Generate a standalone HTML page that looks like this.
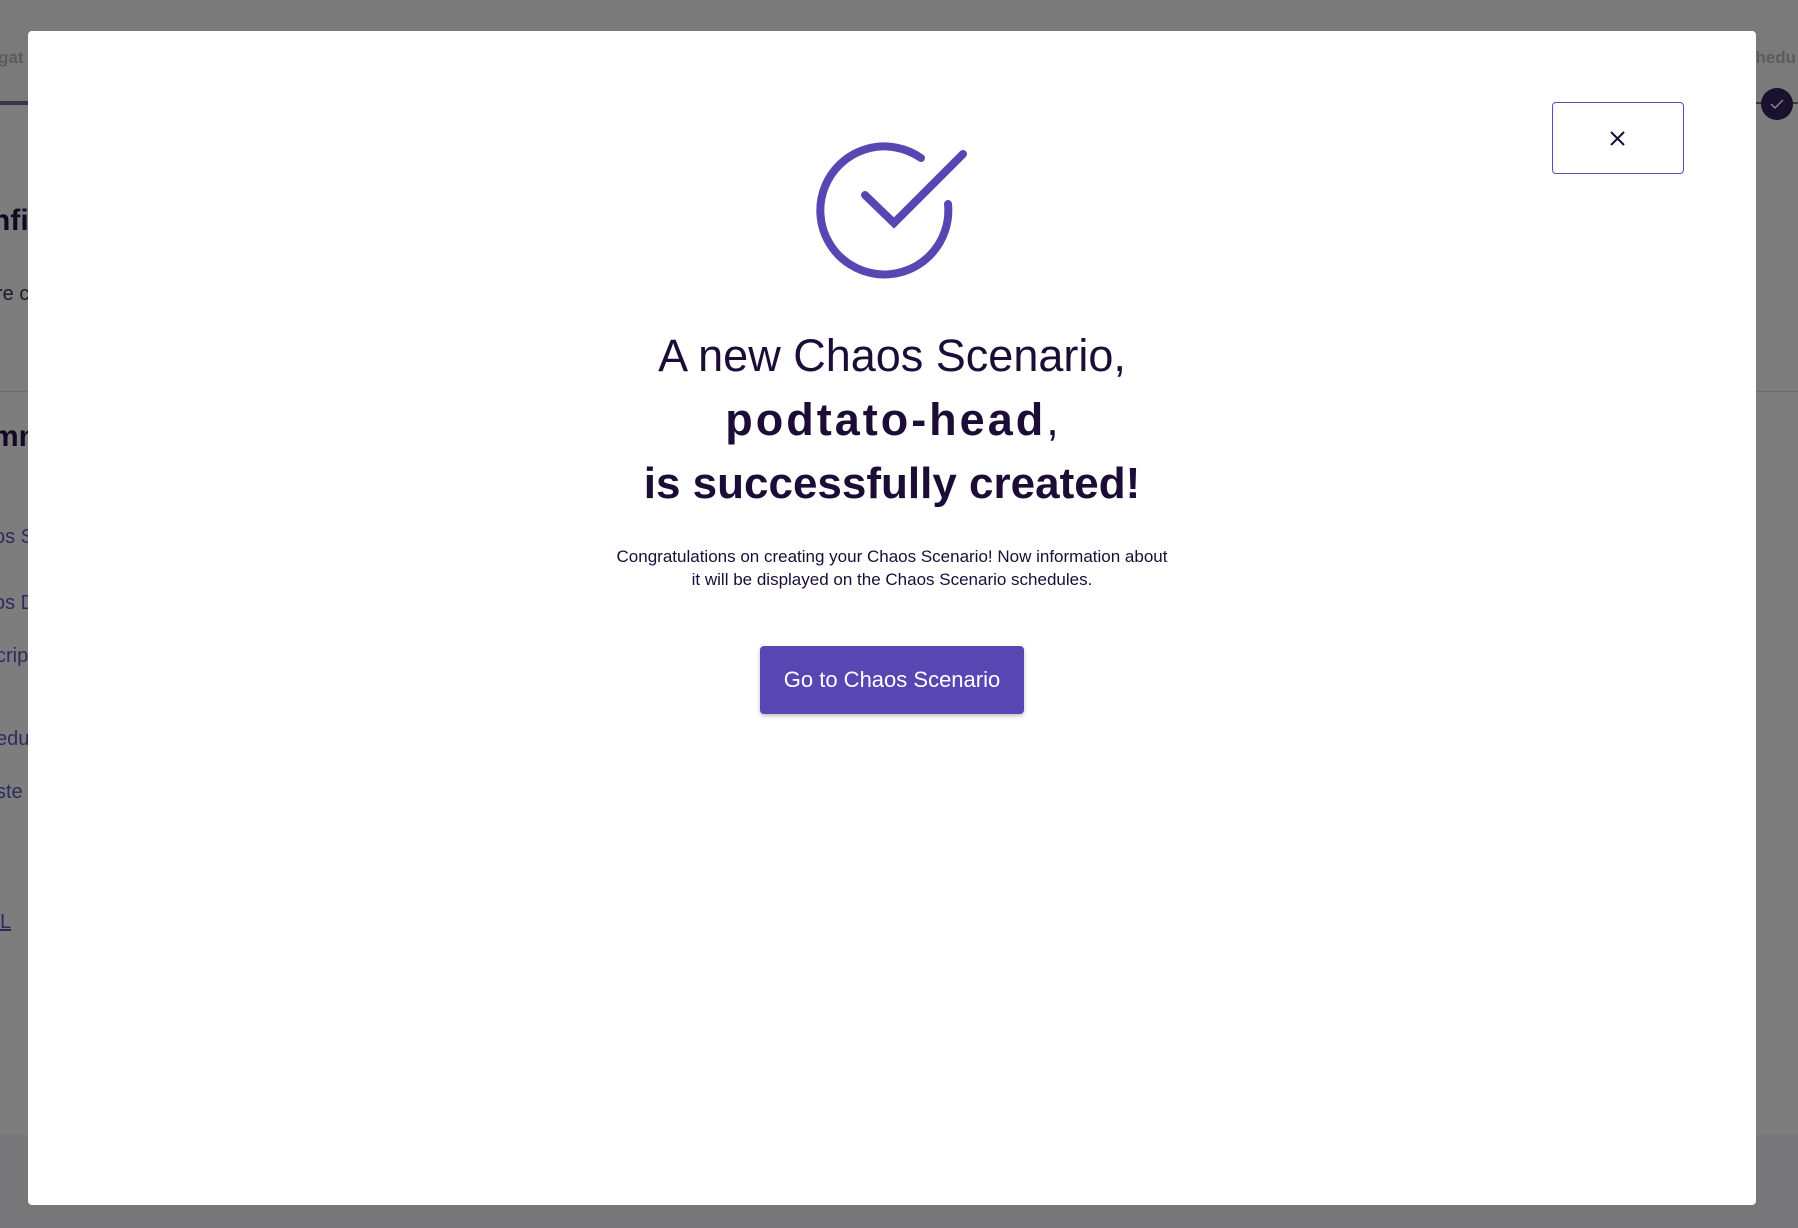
<!DOCTYPE html>
<html><head><meta charset="utf-8">
<style>
*{margin:0;padding:0;box-sizing:border-box}
html,body{width:1798px;height:1228px;overflow:hidden;background:#7d7d7e;font-family:"Liberation Sans",sans-serif;position:relative}
.bgt{position:absolute;white-space:nowrap}
.modal{position:absolute;left:28px;top:31px;width:1728px;height:1174px;background:#fff;border-radius:4px}
.close{position:absolute;left:1524px;top:71px;width:132px;height:72px;border:1.5px solid #5b4bb7;border-radius:4px;background:#fff}
.h{position:absolute;left:0;width:100%;text-align:center;color:#1b0d36;white-space:nowrap}
.btn{position:absolute;left:732px;top:615px;width:264px;height:68px;background:#5847b3;border-radius:4px;color:#fff;font-size:22px;line-height:68px;text-align:center;box-shadow:0 2px 4px rgba(0,0,0,.25)}
</style></head><body>
<div style="position:absolute;left:0;top:0;width:1798px;height:103px;background:#7a7a7b"></div>
<div style="position:absolute;left:0;top:101px;width:60px;height:4px;background:#3a3645"></div>
<div style="position:absolute;left:1740px;top:102px;width:58px;height:2px;background:#3a3645"></div>
<div style="position:absolute;left:0;top:391px;width:1798px;height:1px;background:#6e6e70"></div>
<div style="position:absolute;left:0;top:1135px;width:1798px;height:93px;background:#777779"></div>
<div style="position:absolute;left:1761px;top:88px;width:32px;height:32px;border-radius:50%;background:#1a1030"></div>
<svg style="position:absolute;left:1761px;top:88px" width="32" height="32"><path d="M10 16l4 4 8-8" fill="none" stroke="#888" stroke-width="1.5"/></svg>
<div class="bgt" style="left:-2px;top:48px;font-size:17px;color:#5c5c5e;font-weight:bold">gat</div>
<div class="bgt" style="left:1746px;top:48px;font-size:17px;color:#5c5c5e;font-weight:bold">chedu</div>
<div class="bgt" style="left:-8px;top:204px;font-size:30px;font-weight:bold;color:#120a22">nfi</div>
<div class="bgt" style="left:-4px;top:283px;font-size:20px;color:#1d1a26">re c</div>
<div class="bgt" style="left:-8px;top:420px;font-size:30px;font-weight:bold;color:#120a22">mn</div>
<div class="bgt" style="left:-6px;top:526px;font-size:20px;color:#2e2a60">os S</div>
<div class="bgt" style="left:-6px;top:592px;font-size:20px;color:#2e2a60">os D</div>
<div class="bgt" style="left:-4px;top:645px;font-size:20px;color:#2e2a60">crip</div>
<div class="bgt" style="left:-4px;top:728px;font-size:20px;color:#2e2a60">edu</div>
<div class="bgt" style="left:-4px;top:781px;font-size:20px;color:#2e2a60">ste</div>
<div class="bgt" style="left:0px;top:911px;font-size:20px;color:#2e2a60;text-decoration:underline">L</div>

<div class="modal">
  <div class="close"><svg width="132" height="72" style="position:absolute;left:-1.5px;top:-1.5px"><path d="M59 30l13 13M72 30l-13 13" stroke="#1b0d36" stroke-width="2" fill="none"/></svg></div>
  <svg style="position:absolute;left:0;top:0" width="1728" height="300">
    <g fill="none" stroke="#5847b3" stroke-width="8" stroke-linecap="round">
      <path d="M893 127 A64 64 0 1 0 920 173"/>
      <path d="M837 164 L866 192 L935 123"/>
    </g>
  </svg>
  <div class="h" style="top:297px;font-size:45px;line-height:56px">A new Chaos Scenario,</div>
  <div class="h" style="top:361px;font-size:45px;line-height:56px"><b style="letter-spacing:3px">podtato-head</b>,</div>
  <div class="h" style="top:425px;font-size:44px;line-height:56px;font-weight:bold">is successfully created!</div>
  <div class="h" style="top:514px;font-size:17px;line-height:23px">Congratulations on creating your Chaos Scenario! Now information about<br>it will be displayed on the Chaos Scenario schedules.</div>
  <div class="btn">Go to Chaos Scenario</div>
</div>
</body></html>
